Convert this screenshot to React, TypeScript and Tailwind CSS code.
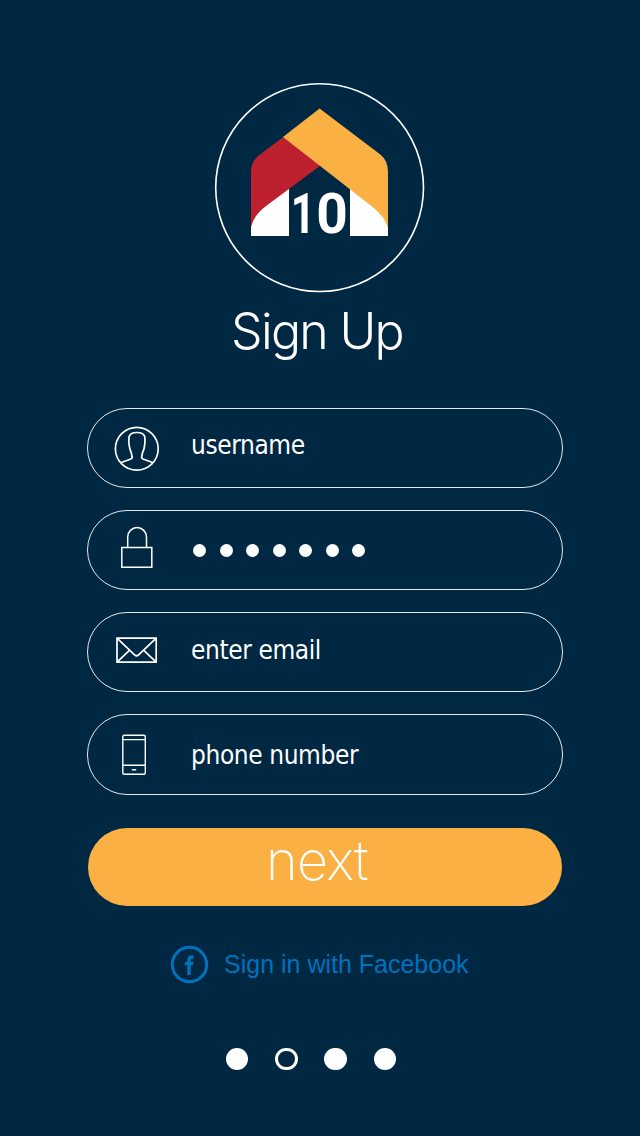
import type { ReactNode } from "react";

function Logo() {
  return (
    <svg className="block h-[212px] w-[212px]" viewBox="214 82 212 212" fill="none">
      <circle cx="319.6" cy="187.6" r="103.9" stroke="#fff" strokeWidth="1.6" />
      <path d="M251 236V210L289 188V236Z M350 188L388 210V236H350Z" fill="#fff" />
      <path d="M284 136.500L259 155.200Q251 161.500 251 171.500V227Q254 215 266 206L320.500 165.500Z" fill="#bd202e" />
      <path d="M319.600 108.500L380 154.200Q388 160.500 388 171.500V228Q384.500 216 372 206.500L283 137Z" fill="#fbb044" />
      <g fill="#fff" className="font-['Roboto',sans-serif] text-[55px] font-bold">
        <text transform="translate(290.7 233) scale(.78 1)">1</text>
        <text x="316.300" y="233">0</text>
      </g>
    </svg>
  );
}

function UserIcon() {
  return (
    <svg className="h-12 w-12" viewBox="113 425 48 48" fill="none" stroke="#fff" strokeWidth="1.7">
      <circle cx="136.800" cy="448.700" r="21.400" />
      <path d="M121.300 462.500L130.800 459Q132.700 458.200 132 456.300Q131.600 452.500 130 449.500L129.200 445.500Q128.400 441 129 437C129.700 433.500 132.800 432.500 136.900 432.500S144.100 433.500 144.800 437Q145.400 441 144.600 445.500L143.800 449.500Q142.200 452.500 141.800 456.300Q141.100 458.200 143 459L152.500 462.500" />
    </svg>
  );
}

function LockIcon() {
  return (
    <svg className="h-12 w-12" viewBox="113 525 48 48" fill="none" stroke="#fff" strokeWidth="1.500">
      <path d="M127.700 547V537A9.400 9.400 0 0 1 146.500 537V547M121.800 547.500H151.800V567.300H121.800Z" />
    </svg>
  );
}

function MailIcon() {
  return (
    <svg className="h-12 w-12" viewBox="113 626 48 48" fill="none" stroke="#fff" strokeWidth="1.700">
      <path d="M117 638.100H156.200V662.200H117ZM117 638.100L134.800 655Q136.600 656.500 138.400 655L156.200 638.100M117 662.200L129.700 650.200M156.200 662.200L143.500 650.200" />
    </svg>
  );
}

function PhoneIcon() {
  return (
    <svg className="h-12 w-12" viewBox="113 730.500 48 48" fill="none" stroke="#fff" strokeWidth="1.400">
      <rect x="122.800" y="735.700" width="22.500" height="39" rx="1.500" />
      <path d="M122.800 740.100H145.300M122.800 765.800H145.300M131.800 770.200H136.200" />
    </svg>
  );
}

function Field({ icon, children, pad, shift }: { icon: ReactNode; children: ReactNode; pad: string; shift: string }) {
  return (
    <div className="flex h-[80.500px] w-[476px] items-start rounded-[40px] border border-white/90 pl-[25px]">
      <div className={pad}>{icon}</div>
      <div className={`ml-[30px] font-['DejaVu_Sans_Condensed','DejaVu_Sans',sans-serif] text-[26px] leading-8 [font-stretch:condensed] text-white ${shift}`}>
        {children}
      </div>
    </div>
  );
}

export default function App() {
  return (
    <main className="flex h-[1136px] w-[640px] flex-col items-center bg-[#002842] pt-[82px]">
      <Logo />
      <h1 className="mt-[6px] mr-[6px] mb-px h-16 whitespace-nowrap font-['Inter',sans-serif] text-[50px] leading-[62px] font-light tracking-[-1.700px] text-white">
        Sign Up
      </h1>
      <div className="mt-[42.500px] ml-[10px] flex flex-col gap-[21.700px]">
        <Field icon={<UserIcon />} pad="pt-[16px]" shift="pt-[20px] tracking-[-0.400px]">username</Field>
        <Field icon={<LockIcon />} pad="pt-[14px]" shift="pt-[33px]">
          <div className="flex gap-[13.500px] pl-[2px]">
            {Array.from({ length: 7 }, (_, i) => (
              <span key={i} className="h-[13px] w-[13px] rounded-full bg-white" />
            ))}
          </div>
        </Field>
        <Field icon={<MailIcon />} pad="pt-[13px]" shift="pt-[21px] tracking-[-0.400px]">enter email</Field>
        <Field icon={<PhoneIcon />} pad="pt-[15px]" shift="pt-[24px] tracking-[-0.400px]">phone number</Field>
      </div>
      <button className="mt-[33px] ml-[10px] flex h-[78px] w-[474px] shrink-0 justify-center rounded-[39px] bg-[#fbb044] pt-[3px] font-['Inter',sans-serif] text-[54px] leading-[60px] font-extralight tracking-[-0.700px] text-white">
        <span className="mr-[16px]">next</span>
      </button>
      <a className="mt-[39px] flex h-10 w-[300px] items-center text-[#0071bc]">
        <svg className="h-10 w-10 shrink-0" viewBox="170 945 40 40" fill="none">
          <circle cx="189.500" cy="964.500" r="17.200" stroke="currentColor" strokeWidth="3" />
          <path d="M187.300 975V965.200H184.800V961.900H187.300V960Q187.300 955.200 191.500 955.200H193.500V958.700H192.300Q190.700 958.700 190.700 960.500V961.900H193.400L193 965.200H190.700V975Z" fill="currentColor" />
        </svg>
        <span className="ml-[14px] whitespace-nowrap font-['Liberation_Sans',Arial,sans-serif] text-[25px]">Sign in with Facebook</span>
      </a>
      <div className="mt-[63px] mr-[18px] flex gap-[26.700px]">
        <span className="h-[22.500px] w-[22.500px] rounded-full bg-white" />
        <span className="h-[22.500px] w-[22.500px] rounded-full border-3 border-white" />
        <span className="h-[22.500px] w-[22.500px] rounded-full bg-white" />
        <span className="h-[22.500px] w-[22.500px] rounded-full bg-white" />
      </div>
    </main>
  );
}
